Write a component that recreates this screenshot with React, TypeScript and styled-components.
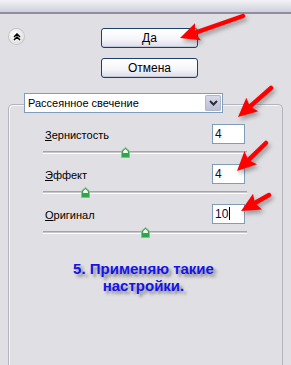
import React from 'react';
import styled, { createGlobalStyle } from 'styled-components';

const GlobalStyle = createGlobalStyle`
  html,
  body {
    margin: 0;
    padding: 0;
    background: #e0dfe3;
  }
`;

const Page = styled.div`
  position: relative;
  width: 291px;
  height: 365px;
  overflow: hidden;
  background: #e0dfe3;
  font-family: 'Liberation Sans', Arial, sans-serif;
  color: #000;
`;

const TopBar = styled.div`
  height: 12px;
  background: linear-gradient(#f2f2f6, #d0d0dc);
  border-bottom: 2px solid #8e8ea0;
`;

const Head = styled.div`
  display: flex;
  padding: 14px 0 0 9px;
`;

const CollapseButton = styled.div`
  width: 15px;
  height: 15px;
  margin-top: 1px;
  border-radius: 50%;
  background: radial-gradient(circle at 40% 35%, #ffffff, #d6d6d8);
  box-shadow: 0 0 0 1px #c4c4c8;
  display: flex;
  align-items: center;
  justify-content: center;
`;

const ButtonColumn = styled.div`
  display: flex;
  flex-direction: column;
  gap: 10px;
  margin-left: 77px;
`;

const Button = styled.div`
  width: 95px;
  height: 18px;
  border: 1px solid #1c3f72;
  border-radius: 3px;
  background: linear-gradient(#ffffff 0%, #f6f6fa 55%, #dcdce8 100%);
  box-shadow: inset 0 -1px 0 #c2c8dc;
  font-size: 12px;
  line-height: 18px;
  text-align: center;
`;

const Group = styled.div`
  margin: 26px 8px 0 8px;
  height: 270px;
  border: 1px solid #b4b4bc;
  border-bottom: none;
  border-radius: 5px 5px 0 0;
  box-shadow: inset 1px 1px 0 #f6f6f8;
  padding: 0 37px 0 34px;
`;

const Select = styled.div`
  display: flex;
  align-items: stretch;
  width: 197px;
  height: 18px;
  margin: -12px 0 0 -19px;
  border: 1px solid #7f9db9;
  background: #fff;
  font-size: 11px;
`;

const SelectText = styled.div`
  flex: 1;
  line-height: 18px;
  padding-left: 3px;
`;

const SelectArrow = styled.div`
  width: 16px;
  margin: 1px;
  border-radius: 2px;
  background: linear-gradient(#d8dcec, #b8bed4);
  box-shadow: inset 0 0 0 1px #b0b6cc;
  display: flex;
  align-items: center;
  justify-content: center;
`;

const Settings = styled.div`
  display: flex;
  flex-direction: column;
  margin-top: 11px;
`;

const Row = styled.div`
  display: flex;
  align-items: center;
  justify-content: space-between;
  height: 20px;
`;

const Label = styled.span`
  font-size: 11px;
  padding-left: 2px;
  margin-top: 2px;

  u {
    text-decoration: underline;
  }
`;

const Field = styled.div`
  width: 29px;
  height: 18px;
  border: 1px solid #7f9db9;
  background: #fff;
  font-size: 12px;
  line-height: 18px;
  padding-left: 2px;
  color: #0a0a40;
`;

const Caret = styled.span`
  display: inline-block;
  width: 1px;
  height: 13px;
  margin-left: 1px;
  vertical-align: -2px;
  background: #000;
`;

const SliderBox = styled.div`
  position: relative;
  height: 20px;
`;

const Track = styled.div`
  position: absolute;
  left: 0;
  right: -2px;
  top: 7px;
  height: 1px;
  border-top: 1px solid #a4a4ac;
  border-bottom: 1px solid #ffffff;
  background: #c8c8cc;
`;

const Thumb = styled.svg`
  position: absolute;
  top: 3px;
`;

const Note = styled.div`
  margin-top: 16px;
  margin-left: -1px;
  text-align: center;
  font-family: 'Liberation Sans', Arial, sans-serif;
  font-weight: bold;
  font-size: 15px;
  line-height: 17px;
  color: #1414e6;
  text-shadow: 3px 3px 3px rgba(70, 70, 80, 0.55);
`;

const Overlay = styled.svg`
  position: absolute;
  left: 0;
  top: 0;
  pointer-events: none;
  filter: drop-shadow(2px 3px 2px rgba(60, 60, 60, 0.45));
`;

const settings = [
  { key: 'З', rest: 'ернистость', value: '4', pos: 82 },
  { key: 'Э', rest: 'ффект', value: '4', pos: 42 },
  { key: 'О', rest: 'ригинал', value: '10', pos: 102, caret: true },
];

const arrows = [
  { from: [243, 16], to: [180, 38] },
  { from: [271, 88], to: [238, 117] },
  { from: [266, 143], to: [237, 171] },
  { from: [269, 195], to: [241, 211] },
];

const Arrow: React.FC<{ from: number[]; to: number[] }> = ({ from, to }) => {
  const dx = to[0] - from[0];
  const dy = to[1] - from[1];
  const len = Math.hypot(dx, dy);
  const ux = dx / len;
  const uy = dy / len;
  const head = 19;
  const half = 9;
  const bx = to[0] - ux * head;
  const by = to[1] - uy * head;
  const pts = [
    [to[0], to[1]],
    [bx - uy * half, by + ux * half],
    [bx + ux * 3, by + uy * 3],
    [bx + uy * half, by - ux * half],
  ]
    .map((p) => p.join(','))
    .join(' ');
  return (
    <g>
      <line
        x1={from[0]}
        y1={from[1]}
        x2={bx + ux * 4}
        y2={by + uy * 4}
        stroke="#f00"
        strokeWidth={4.5}
        strokeLinecap="round"
      />
      <polygon points={pts} fill="#f00" />
    </g>
  );
};

const App: React.FC = () => {
  return (
    <Page>
      <GlobalStyle />
      <TopBar />
      <Head>
        <CollapseButton>
          <svg width="8" height="8" viewBox="0 0 8 8">
            <path d="M1 4 L4 1 L7 4 M1 7 L4 4 L7 7" fill="none" stroke="#000" strokeWidth="1.5" />
          </svg>
        </CollapseButton>
        <ButtonColumn>
          <Button>Да</Button>
          <Button>Отмена</Button>
        </ButtonColumn>
      </Head>
      <Group>
        <Select>
          <SelectText>Рассеянное свечение</SelectText>
          <SelectArrow>
            <svg width="9" height="6" viewBox="0 0 9 6">
              <path d="M1 1 L4.5 4.5 L8 1" fill="none" stroke="#2b2b3c" strokeWidth="2" />
            </svg>
          </SelectArrow>
        </Select>
        <Settings>
          {settings.map((s) => (
            <React.Fragment key={s.rest}>
              <Row>
                <Label>
                  <u>{s.key}</u>
                  {s.rest}
                </Label>
                <Field>
                  {s.value}
                  {s.caret && <Caret />}
                </Field>
              </Row>
              <SliderBox>
                <Track />
                <Thumb width="9" height="11" viewBox="0 0 9 11" style={{ left: s.pos - 4 }}>
                  <path d="M0.5 4 L4.5 0.5 L8.5 4 L8.5 10.5 L0.5 10.5 Z" fill="#2fa64a" stroke="#8fb79a" />
                  <path d="M2 4.5 L4.5 2 L7 4.5 L7 6 L2 6 Z" fill="#f4fff4" />
                </Thumb>
              </SliderBox>
            </React.Fragment>
          ))}
        </Settings>
        <Note>
          5. Применяю такие
          <br />
          настройки.
        </Note>
      </Group>
      <Overlay width="291" height="365" viewBox="0 0 291 365">
        {arrows.map((a, i) => (
          <Arrow key={i} from={a.from} to={a.to} />
        ))}
      </Overlay>
    </Page>
  );
};

export default App;
